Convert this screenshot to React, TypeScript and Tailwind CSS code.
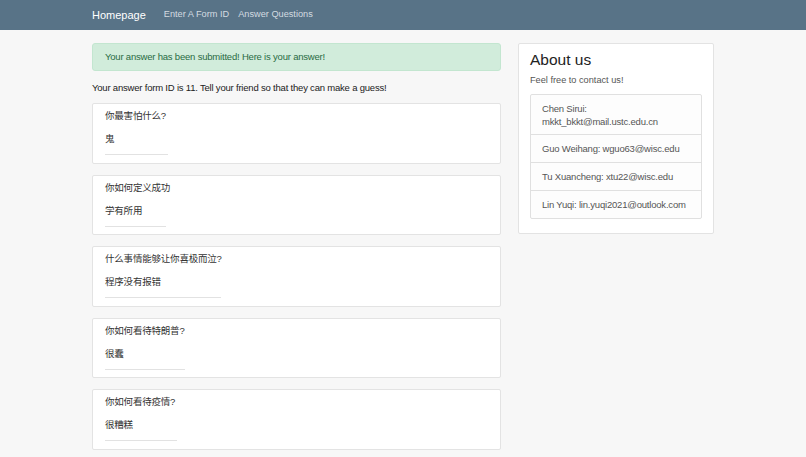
const questions = [
  { q: "你最害怕什么?", a: "鬼", line: "w-[63px]" },
  { q: "你如何定义成功", a: "学有所用", line: "w-[61px]" },
  { q: "什么事情能够让你喜极而泣?", a: "程序没有报错", line: "w-[116px]" },
  { q: "你如何看待特朗普?", a: "很蠢", line: "w-[80px]" },
  { q: "你如何看待疫情?", a: "很糟糕", line: "w-[72px]" },
];

const contacts = [
  "Chen Sirui: mkkt_bkkt@mail.ustc.edu.cn",
  "Guo Weihang: wguo63@wisc.edu",
  "Tu Xuancheng: xtu22@wisc.edu",
  "Lin Yuqi: lin.yuqi2021@outlook.com",
];

export default function App() {
  return (
    <div className="min-h-[457px] bg-[#f7f7f7] font-['Liberation_Sans','Noto_Sans_CJK_SC',sans-serif] text-[9.5px] tracking-[-0.2px] text-[#333]">
      <nav className="flex h-[30px] items-center bg-[#587387] px-[92px]">
        <span className="mr-[18px] text-[11px] font-medium tracking-normal text-white">Homepage</span>
        <span className="mr-[9px] text-[9.2px] tracking-normal text-[#d3dbe1]">Enter A Form ID</span>
        <span className="text-[9.2px] tracking-normal text-[#d3dbe1]">Answer Questions</span>
      </nav>

      <div className="flex items-start gap-[17px] px-[92px] pt-[13px]">
        <main className="w-[409px]">
          <div className="flex h-[28px] items-center rounded-[3px] border border-[#c3e6d0] bg-[#d1ecdb] px-[12px] text-[#2a6b43]">
            Your answer has been submitted! Here is your answer!
          </div>
          <p className="mt-[10px] mb-[8px] text-[#222]">
            Your answer form ID is 11. Tell your friend so that they can make a guess!
          </p>
          <div className="flex flex-col gap-[11px]">
            {questions.map((item) => (
              <div
                key={item.q}
                className="h-[60.5px] rounded-[2px] border border-[#e3e3e3] bg-white px-[12px] pt-[5px]"
              >
                <div className="leading-[14px]">{item.q}</div>
                <div className="mt-[9px] leading-[14px]">{item.a}</div>
                <div className={`mt-[8px] h-px bg-[#e2e2e2] ${item.line}`} />
              </div>
            ))}
          </div>
        </main>

        <aside className="w-[196px] rounded-[2px] border border-[#e3e3e3] bg-white px-[11px] pt-[6px] pb-[14px]">
          <h2 className="text-[15.5px] font-medium leading-[20px] tracking-normal text-[#222]">About us</h2>
          <p className="mt-[4px] text-[9.2px] tracking-normal text-[#555]">Feel free to contact us!</p>
          <ul className="mt-[6px] rounded-[2px] border border-[#e0e0e0] bg-[#fdfdfd] text-[#555]">
            {contacts.map((c, i) => (
              <li
                key={c}
                className={`px-[11px] py-[7px] leading-[13px] ${i > 0 ? "border-t border-[#e0e0e0]" : ""} ${i === 0 ? "pb-[6px]" : ""}`}
              >
                {c}
              </li>
            ))}
          </ul>
        </aside>
      </div>
    </div>
  );
}
